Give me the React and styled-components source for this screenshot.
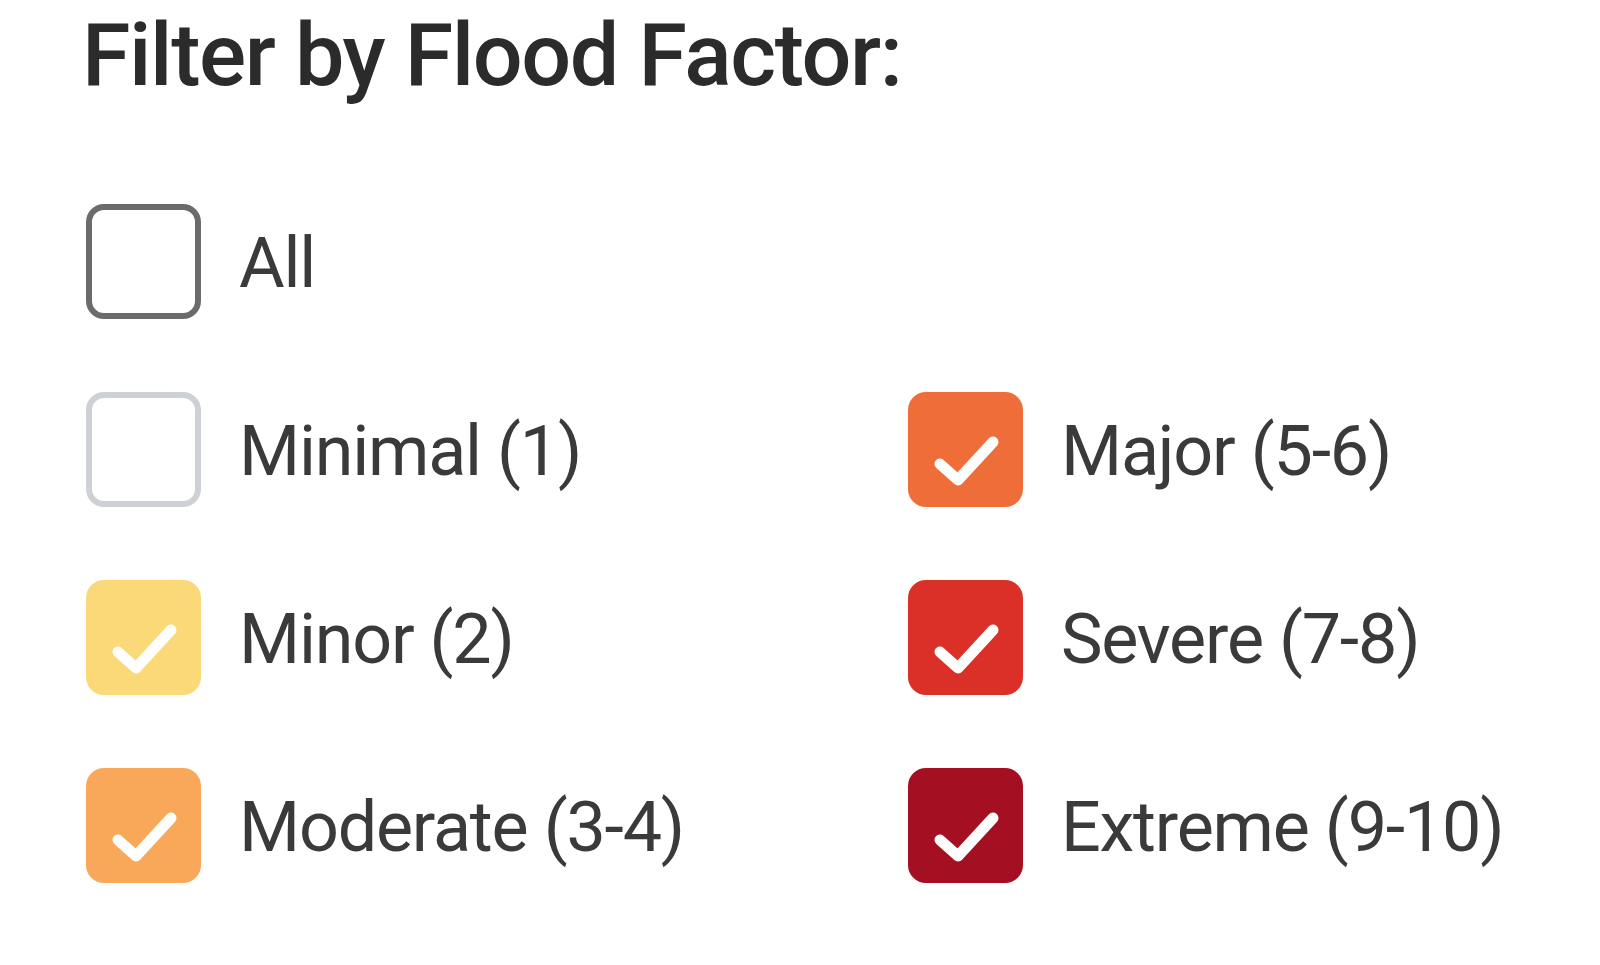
import React, { useState } from "react";
import styled, { createGlobalStyle } from "styled-components";

const GlobalStyle = createGlobalStyle`
  body {
    margin: 0;
    background: #ffffff;
    font-family: Roboto, "Liberation Sans", sans-serif;
  }
`;

const Panel = styled.div`
  padding: 0 0 0 86px;
`;

const Title = styled.h2`
  margin: 0 0 0 -4px;
  padding-top: 5px;
  font-size: 88px;
  line-height: 100px;
  font-weight: 500;
  color: #2b2b2b;
  letter-spacing: -1.4px;
`;

const Options = styled.div`
  display: grid;
  grid-template-columns: 822px 1fr;
  grid-auto-rows: 115px;
  row-gap: 73px;
  margin-top: 99px;
`;

const Option = styled.label`
  display: flex;
  align-items: center;
  gap: 38px;
  cursor: pointer;
  grid-column: ${(p) => p.$col};
  grid-row: ${(p) => p.$row};
`;

const Box = styled.span`
  box-sizing: border-box;
  width: 115px;
  height: 115px;
  flex: none;
  border-radius: 18px;
  display: flex;
  align-items: center;
  justify-content: center;
  background: ${(p) => (p.$checked ? p.$color : "#ffffff")};
  border: ${(p) => (p.$checked ? "none" : `6px solid ${p.$color}`)};
`;

const Label = styled.span`
  font-size: 70px;
  color: #3a3a3a;
  letter-spacing: -1.2px;
  padding-top: 2px;
`;

const Check = () => (
  <svg width="115" height="115" viewBox="0 0 115 115">
    <path
      d="M32 72 L50 88 L85 50"
      fill="none"
      stroke="#ffffff"
      strokeWidth="11"
      strokeLinecap="round"
      strokeLinejoin="round"
    />
  </svg>
);

const factors = [
  { id: "all", label: "All", color: "#6b6b6b", col: 1, row: 1 },
  { id: "minimal", label: "Minimal (1)", color: "#cdd1d6", col: 1, row: 2 },
  { id: "minor", label: "Minor (2)", color: "#fbd878", col: 1, row: 3, on: true },
  { id: "moderate", label: "Moderate (3-4)", color: "#f9a85a", col: 1, row: 4, on: true },
  { id: "major", label: "Major (5-6)", color: "#ef6d39", col: 2, row: 2, on: true },
  { id: "severe", label: "Severe (7-8)", color: "#da3027", col: 2, row: 3, on: true },
  { id: "extreme", label: "Extreme (9-10)", color: "#a40f22", col: 2, row: 4, on: true },
];

const App = () => {
  const [selected, setSelected] = useState(
    factors.filter((f) => f.on).map((f) => f.id)
  );

  const toggle = (id) =>
    setSelected((s) => (s.includes(id) ? s.filter((x) => x !== id) : [...s, id]));

  return (
    <Panel>
      <GlobalStyle />
      <Title>Filter by Flood Factor:</Title>
      <Options>
        {factors.map((f) => {
          const checked = selected.includes(f.id);
          return (
            <Option key={f.id} $col={f.col} $row={f.row} onClick={() => toggle(f.id)}>
              <Box $checked={checked} $color={f.color}>
                {checked && <Check />}
              </Box>
              <Label>{f.label}</Label>
            </Option>
          );
        })}
      </Options>
    </Panel>
  );
};

export default App;
